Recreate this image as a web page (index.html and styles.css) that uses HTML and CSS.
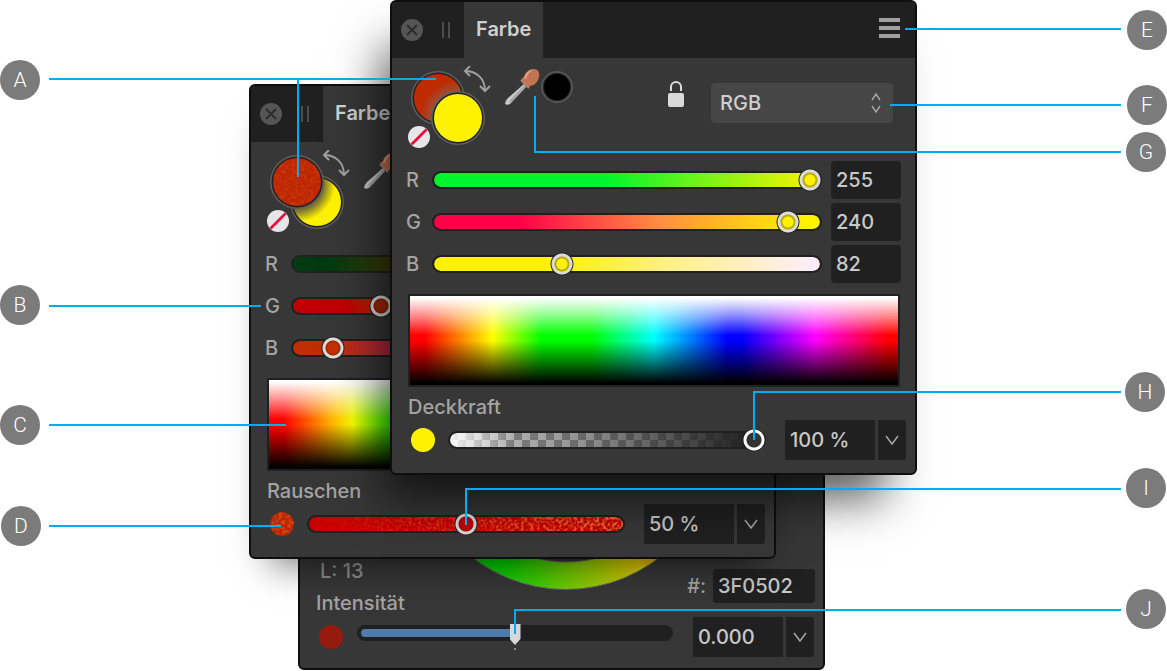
FILE: index.html
```html
<!DOCTYPE html>
<html lang="de">
<head>
<meta charset="utf-8">
<title>Farbe</title>
<link rel="stylesheet" href="styles.css">
</head>
<body>
<svg class="defs" width="0" height="0" aria-hidden="true">
  <defs>
    <symbol id="close" viewBox="0 0 22 22"><circle cx="11" cy="11" r="11" fill="#555"/><path d="M6 6l10 10M16 6L6 16" stroke="#2c2c2c" stroke-width="2" fill="none"/></symbol>
    <symbol id="grip" viewBox="0 0 8 16"><path d="M1 0v16M7 0v16" stroke="#4c4c4c" stroke-width="2"/></symbol>
    <symbol id="menu" viewBox="0 0 21 20"><path d="M0 2h21M0 10h21M0 18h21" stroke="#a0a0a0" stroke-width="4"/></symbol>
    <symbol id="swap" viewBox="0 0 28 28"><path d="M2 5C13 5 22 12 22 25M7 0L2 5l5 5M17 20l5 5 5-5" fill="none" stroke="#a0a0a0" stroke-width="2"/></symbol>
    <symbol id="none" viewBox="0 0 22 22"><circle cx="11" cy="11" r="11" fill="#e6e6e8"/><path d="M3.5 18.500L18.500 3.500" stroke="#f5033e" stroke-width="2.600"/></symbol>
    <symbol id="dropper" viewBox="0 0 36 38">
      <path d="M20 16L4 30q-3 3-3 6 3 2 6-1L22 19z" fill="#c8c8c8"/>
      <path d="M21 18L6 34" stroke="#a2a2a2" stroke-width="2"/>
      <path d="M17 11l3-2c1-5 6-8 9-8 5 0 7 3 6 8-1 5-5 9-9 9l-2 2z" fill="#c47452"/>
      <path d="M20 11c1-6 5-9 9-9-4 2-6 5-7 9z" fill="#e3a48c"/>
      <path d="M17 12l8 8" stroke="#bd8068" stroke-width="2"/>
    </symbol>
    <symbol id="lock" viewBox="0 0 16 26"><path d="M3 10V6a5 5 0 0 1 10 0v4" fill="none" stroke="#dadada" stroke-width="2"/><rect y="12" width="16" height="14" rx="2" fill="#dadada"/></symbol>
    <symbol id="chevron" viewBox="0 0 14 10"><path d="M1 1l6 8 6-8" fill="none" stroke="#a8a8a8" stroke-width="1.500"/></symbol>
    <symbol id="updown" viewBox="0 0 10 20"><path d="M1 7l4-6 4 6M1 13l4 6 4-6" fill="none" stroke="#a8a8a8" stroke-width="1.400"/></symbol>
    <radialGradient id="glow" gradientUnits="userSpaceOnUse" cx="50" cy="56" r="38"><stop offset=".72" stop-color="#a04c34"/><stop offset="1" stop-color="#bf2a00"/></radialGradient>
    <radialGradient id="shade" gradientUnits="userSpaceOnUse" cx="30" cy="38" r="38"><stop offset=".7" stop-color="#7a7430"/><stop offset="1" stop-color="#fff200"/></radialGradient>
    <filter id="specks" x="0" y="0" width="1" height="1">
      <feTurbulence type="fractalNoise" baseFrequency=".32" numOctaves="2" seed="4"/>
      <feColorMatrix values="0 0 0 0 .98  0 0 0 0 .3  0 0 0 0 .05  4 0 0 0 -1.700"/>
      <feComposite in2="SourceGraphic" operator="in"/>
    </filter>
    <linearGradient id="fade"><stop offset="0" stop-color="#fff" stop-opacity="0"/><stop offset="1" stop-color="#fff"/></linearGradient>
    <mask id="ramp"><rect width="318" height="18" fill="url(#fade)"/></mask>
  </defs>
</svg>

<main class="stage">
  <section class="panel panel-back" aria-label="Intensität">
    <header class="panel-header"></header>
    <div class="wheel-area">
      <div class="wheel"></div>
      <div class="readouts"><span class="lightness">L: 13</span><label for="intensity">Intensität</label></div>
      <div class="hex"><label for="hex">#:</label><input id="hex" class="field" type="text" value="3F0502"></div>
    </div>
    <div class="amount-row">
      <span class="dot dot-dark"></span>
      <div class="slider slider-intensity"><span class="bar"></span><input id="intensity" type="range" min="0" max="100" value="50"></div>
      <div class="combo"><input class="field" type="text" value="0.000" aria-label="Intensitätswert"><button type="button" aria-label="Werte"><svg width="14" height="10"><use href="#chevron"/></svg></button></div>
    </div>
  </section>

  <section class="panel panel-middle" aria-label="Farbe mit Rauschen">
    <header class="panel-header">
      <button type="button" class="close" aria-label="Schließen"><svg width="22" height="22"><use href="#close"/></svg></button>
      <svg width="8" height="16"><use href="#grip"/></svg>
      <h2 class="tab">Farbe</h2>
    </header>
    <div class="panel-body">
      <div class="tools">
        <svg class="swatches" width="88" height="88" viewBox="0 0 88 88">
          <circle cx="50" cy="56" r="27" fill="#5e5e5e"/><circle cx="50" cy="56" r="25.500" fill="#222"/><circle cx="50" cy="56" r="24" fill="url(#shade)"/>
          <circle cx="30" cy="36" r="27" fill="#5e5e5e"/><circle cx="30" cy="36" r="25.500" fill="#222"/><circle cx="30" cy="36" r="24" fill="#bd2500"/>
          <circle cx="30" cy="36" r="24" filter="url(#specks)" opacity=".15"/>
          <use href="#swap" x="55" y="4" width="28" height="28"/><use href="#none" x="0" y="64" width="22" height="22"/>
        </svg>
        <svg class="dropper" width="36" height="38"><use href="#dropper"/></svg>
      </div>
      <div class="channels">
        <div class="channel"><label for="r2">R</label><div class="slider dark-r"><span class="bar"></span><input id="r2" type="range" max="255" value="190"></div><input class="field" type="text" value="190" aria-label="R-Wert"></div>
        <div class="channel"><label for="g2">G</label><div class="slider dark-g"><span class="bar"></span><input id="g2" type="range" max="255" value="54"></div><input class="field" type="text" value="54" aria-label="G-Wert"></div>
        <div class="channel"><label for="b2">B</label><div class="slider dark-b"><span class="bar"></span><input id="b2" type="range" max="255" value="21"></div><input class="field" type="text" value="21" aria-label="B-Wert"></div>
      </div>
      <div class="spectrum"></div>
      <label class="amount-label" for="noise">Rauschen</label>
    </div>
    <div class="amount-row">
      <svg class="dot" width="24" height="24"><circle cx="12" cy="12" r="12" fill="#bd2500"/><circle cx="12" cy="12" r="12" filter="url(#specks)" opacity=".3"/></svg>
      <div class="slider slider-noise"><span class="bar"><svg width="314" height="14"><g mask="url(#ramp)"><rect width="314" height="14" filter="url(#specks)" opacity=".8"/></g></svg></span><input id="noise" type="range" min="0" max="100" value="50"></div>
      <div class="combo"><input class="field" type="text" value="50 %" aria-label="Rauschwert"><button type="button" aria-label="Werte"><svg width="14" height="10"><use href="#chevron"/></svg></button></div>
    </div>
  </section>

  <section class="panel panel-front" aria-label="Farbe">
    <header class="panel-header">
      <button type="button" class="close" aria-label="Schließen"><svg width="22" height="22"><use href="#close"/></svg></button>
      <svg width="8" height="16"><use href="#grip"/></svg>
      <h2 class="tab">Farbe</h2>
      <button type="button" class="menu" aria-label="Menü"><svg width="21" height="20"><use href="#menu"/></svg></button>
    </header>
    <div class="panel-body">
      <div class="tools">
        <svg class="swatches" width="88" height="88" viewBox="0 0 88 88">
          <circle cx="30" cy="36" r="27" fill="#5e5e5e"/><circle cx="30" cy="36" r="25.500" fill="#222"/><circle cx="30" cy="36" r="24" fill="url(#glow)"/>
          <circle cx="50" cy="56" r="27" fill="#5e5e5e"/><circle cx="50" cy="56" r="25.500" fill="#222"/><circle cx="50" cy="56" r="24" fill="#fff200"/>
          <use href="#swap" x="55" y="4" width="28" height="28"/><use href="#none" x="0" y="64" width="22" height="22"/>
        </svg>
        <svg class="dropper" width="36" height="38"><use href="#dropper"/></svg>
        <span class="picked"></span>
        <button type="button" class="lock" aria-label="Sperren"><svg width="16" height="26"><use href="#lock"/></svg></button>
        <div class="mode"><select aria-label="Farbmodus"><option>RGB</option></select><svg width="10" height="20"><use href="#updown"/></svg></div>
      </div>
      <div class="channels">
        <div class="channel"><label for="r1">R</label><div class="slider light-r"><span class="bar"></span><input id="r1" type="range" max="255" value="255"></div><input class="field" type="text" value="255" aria-label="R-Wert"></div>
        <div class="channel"><label for="g1">G</label><div class="slider light-g"><span class="bar"></span><input id="g1" type="range" max="255" value="240"></div><input class="field" type="text" value="240" aria-label="G-Wert"></div>
        <div class="channel"><label for="b1">B</label><div class="slider light-b"><span class="bar"></span><input id="b1" type="range" max="255" value="82"></div><input class="field" type="text" value="82" aria-label="B-Wert"></div>
      </div>
      <div class="spectrum"></div>
      <label class="amount-label" for="opacity">Deckkraft</label>
    </div>
    <div class="amount-row">
      <span class="dot dot-yellow"></span>
      <div class="slider slider-opacity"><span class="bar"></span><input id="opacity" type="range" min="0" max="100" value="100"></div>
      <div class="combo"><input class="field" type="text" value="100 %" aria-label="Deckkraftwert"><button type="button" aria-label="Werte"><svg width="14" height="10"><use href="#chevron"/></svg></button></div>
    </div>
  </section>

  <svg class="leaders" width="1167" height="671" viewBox="0 0 1167 671" aria-hidden="true">
    <path d="M49 79H436M298 79V177M49 306H261M49 425H286M49 526H281M905 29H1121M890 105H1121M535 96V152H1121M754 440V392H1121M466 525V489H1121M515 634V610H1121"/>
  </svg>
  <span class="pin pin-a">A</span>
  <span class="pin pin-b">B</span>
  <span class="pin pin-c">C</span>
  <span class="pin pin-d">D</span>
  <span class="pin pin-e">E</span>
  <span class="pin pin-f">F</span>
  <span class="pin pin-g">G</span>
  <span class="pin pin-h">H</span>
  <span class="pin pin-i">I</span>
  <span class="pin pin-j">J</span>
</main>
</body>
</html>
```

FILE: styles.css
```css
* { box-sizing: border-box; }

body {
  margin: 0;
  background: #fff;
  color: #a4a4a4;
  font: 500 20px/24px Inter, "Liberation Sans", sans-serif;
}

svg { display: block; flex: none; }
.defs { position: absolute; }

button, input, select {
  margin: 0;
  border: 0;
  padding: 0;
  font: inherit;
  color: inherit;
  background: none;
}

.stage {
  position: relative;
  min-height: 671px;
  overflow: hidden;
}

/* Panels */
.panel {
  position: absolute;
  width: 527px;
  border: 2px solid #0e0e0e;
  border-radius: 6px;
  background: #373737;
}
.panel-back { left: 298px; top: 196px; }
.panel-middle { left: 249px; top: 84px; box-shadow: 4px 22px 36px -18px rgba(0, 0, 0, .6); }
.panel-front { left: 390px; top: 0; box-shadow: -20px 36px 44px -12px rgba(0, 0, 0, .65); }

.panel-header {
  display: flex;
  align-items: center;
  height: 56px;
  padding: 0 15px 0 9px;
  border-radius: 4px 4px 0 0;
  background: #202020;
}
.close { margin-right: 19px; }
.tab {
  display: flex;
  align-items: center;
  align-self: stretch;
  margin: 0 0 0 14px;
  padding: 0 12px 2px;
  background: #373737;
  color: #d0d0d0;
  font-size: 20px;
  font-weight: 600;
}
.menu { margin-left: auto; padding-bottom: 4px; }

.panel-body { padding: 4px 14px 0 16px; }

.tools {
  display: flex;
  align-items: flex-start;
  height: 99px;
  padding-right: 8px;
}
.dropper { margin: 6px 0 0 8px; }
.picked {
  width: 32px;
  height: 32px;
  margin: 9px 0 0 1px;
  border: 2px solid #555;
  border-radius: 50%;
  background: #000;
  box-shadow: inset 0 0 0 1px #222;
}
.lock { margin: 19px 27px 0 auto; }
.mode {
  display: grid;
  align-items: center;
  width: 182px;
  margin-top: 21px;
}
.mode select, .mode svg { grid-area: 1 / 1; }
.mode select {
  height: 40px;
  padding: 0 9px;
  border-radius: 4px;
  appearance: none;
  background: #464646;
  color: #d0d0d0;
}
.mode svg { justify-self: end; margin-right: 12px; pointer-events: none; }

.channels { display: grid; gap: 4px; }
.channel {
  display: grid;
  grid-template-columns: 24px 1fr 70px;
  align-items: center;
}
.channel label { margin-left: -2px; }
.channel .slider { margin-right: 9px; }

.field {
  min-width: 0;
  width: 100%;
  height: 38px;
  padding: 0 5px;
  border-radius: 4px;
  background: #202020;
  color: #c8c8c8;
}

/* Sliders */
.slider { display: grid; align-items: center; }
.slider > * { grid-area: 1 / 1; }
.bar {
  height: 18px;
  border: 2px solid #202020;
  border-radius: 9px;
  background-clip: padding-box;
  overflow: hidden;
}
.slider input {
  width: 100%;
  height: 24px;
  appearance: none;
}
.slider input::-webkit-slider-thumb {
  width: 24px;
  height: 24px;
  border-radius: 50%;
  appearance: none;
  background: radial-gradient(circle closest-side, var(--core) 5px, var(--rim) 6px, var(--rim) 7px, var(--ring) 8px, var(--ring) 10px, #202020 11px, #202020 11px, transparent 12px);
}
.slider { --core: #fff200; --rim: #b8ac00; --ring: #dcdcdc; }
.light-r .bar { background-image: linear-gradient(90deg, #00f52d 44%, #fff200); }
.light-g .bar { background-image: linear-gradient(90deg, #ff0048 22%, #ff8c42 58%, #fff200 96%); }
.light-b .bar { background-image: linear-gradient(90deg, #fff200 32%, #fff07c 58%, #ffeefa 98%); }
.dark-r, .dark-g, .dark-b { --core: #a82800; --rim: #942200; }
.dark-b { --core: #c53000; --rim: #a82800; }
.dark-r .bar { background-image: linear-gradient(90deg, #003a10 9%, #4c3c00 30%, #bd2500); }
.dark-g .bar { background-image: linear-gradient(90deg, #c00000 14%, #c03000 24%, #c0f000); }
.dark-b .bar { background-image: linear-gradient(90deg, #c02d00 8%, #b02858 32%, #c02dff); }

.spectrum {
  height: 93px;
  margin: 11px 1px 0 0;
  border: 2px solid #202020;
  background:
    linear-gradient(transparent 50%, #000 98%),
    linear-gradient(#fff 2%, rgba(255, 255, 255, .55) 22%, rgba(255, 255, 255, 0) 44%),
    linear-gradient(90deg, #f00 3%, #ff0 17%, #0f0 27%, #0f0 37%, #0ff 50%, #00f 65%, #00f 68%, #f0f 83%, #f00 98%);
}

.amount-label { display: block; padding-bottom: 1px; margin-top: 8px; }

.amount-row {
  display: flex;
  align-items: center;
  padding: 0 9px 13px 19px;
}
.dot {
  flex: none;
  width: 24px;
  height: 24px;
  margin-right: 13px;
  border-radius: 50%;
}
.dot-yellow { background: #fff200; }
.dot-dark { background: #961a0e; }
.amount-row .slider { flex: 1; margin-right: 19px; }
.slider-opacity { --core: #333; --rim: #333; --ring: #fff; }
.slider-opacity .bar {
  background-image:
    linear-gradient(90deg, rgba(255, 255, 255, .9), rgba(255, 255, 255, 0) 20%),
    linear-gradient(90deg, rgba(32, 32, 32, 0), rgba(32, 32, 32, .3) 40%, #202020 96%),
    repeating-conic-gradient(#c8c8c8 0 25%, #8c8c8c 0 50%);
  background-size: auto, auto, 16px 14px;
}
.slider-noise { --core: #c80000; --rim: #b40000; }
.slider-noise .bar { background-color: #c80000; }

.combo { display: flex; gap: 3px; }
.combo .field { width: 90px; height: 40px; border-radius: 0; }
.combo button {
  display: grid;
  place-items: center;
  width: 28px;
  height: 40px;
  border-radius: 0 3px 3px 0;
  background: #202020;
}

/* Intensity panel */
.wheel-area { display: grid; padding: 30px 8px 2px 16px; }
.wheel-area > * { grid-area: 1 / 1; }
.wheel {
  justify-self: center;
  width: 306px;
  height: 306px;
  margin-bottom: 25px;
  border: 1px solid #666;
  border-radius: 50%;
  background:
    radial-gradient(circle, #373737 124px, #666 125px, transparent 126px),
    conic-gradient(from 90deg, #e00000, #e0c800 60deg, #00d000 118deg, #00c000 135deg, #00c8c8 180deg, #0000d8 240deg, #d800d8 300deg, #e00000);
}
.readouts {
  display: grid;
  gap: 8px;
  align-self: end;
  justify-self: start;
}
.lightness { margin-left: 4px; color: #909090; }
.hex {
  display: flex;
  gap: 7px;
  align-items: center;
  align-self: end;
  justify-self: end;
  margin-bottom: 12px;
}
.hex .field { width: 102px; height: 34px; }

.panel-back .amount-row { padding-bottom: 11px; }
.panel-back .dot { margin-right: 14px; }
.panel-back .slider { margin: 0 20px 8px 0; }
.slider-intensity .bar {
  height: 16px;
  border: 4px solid #202020;
  border-radius: 8px;
  background: linear-gradient(90deg, #4e7ba9 50%, #202020 50%);
}
.slider-intensity input::-webkit-slider-thumb {
  width: 11px;
  height: 24px;
  border-radius: 0;
  background: #d8d8d8;
  clip-path: polygon(0 3px, 100% 3px, 100% 18px, 50% 100%, 0 18px);
}
.slider-intensity::after {
  content: "";
  grid-area: 1 / 1;
  align-self: end;
  justify-self: center;
  width: 2px;
  height: 2px;
  margin-bottom: -5px;
  background: #8a8a8a;
}

/* Callouts */
.leaders {
  position: absolute;
  left: 0;
  top: 0;
  fill: none;
  stroke: #00adee;
  stroke-width: 2px;
  pointer-events: none;
}
.pin {
  position: absolute;
  display: grid;
  place-items: center;
  width: 40px;
  height: 40px;
  border-radius: 50%;
  background: #7b7b7b;
  color: #fff;
  font-family: Roboto, sans-serif;
  font-size: 21px;
  font-weight: 300;
}
.pin-a { left: 0; top: 60px; }
.pin-b { left: 0; top: 285px; }
.pin-c { left: 0; top: 405px; }
.pin-d { left: 1px; top: 506px; }
.pin-e { left: 1127px; top: 10px; }
.pin-f { left: 1127px; top: 85px; }
.pin-g { left: 1126px; top: 132px; }
.pin-h { left: 1125px; top: 372px; }
.pin-i { left: 1126px; top: 468px; }
.pin-j { left: 1126px; top: 589px; }
```
